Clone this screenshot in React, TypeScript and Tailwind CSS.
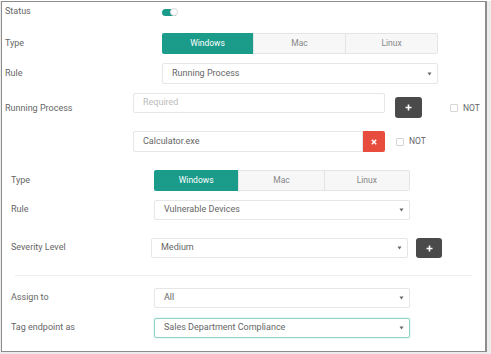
import type { ReactNode } from 'react';

const font = { fontFamily: 'Roboto, "Liberation Sans", sans-serif' };

function Caret() {
  return (
    <svg width="5" height="4" viewBox="0 0 5 4" className="shrink-0">
      <path d="M0.5 0.5 L4.5 0.5 L2.5 3.5 Z" fill="#666" />
    </svg>
  );
}

function Select({ value, className = '', focused = false }: { value: string; className?: string; focused?: boolean }) {
  return (
    <div
      className={`flex items-center justify-between rounded-[2px] border bg-white pl-[9px] pr-[5px] text-[9px] text-[#666] ${
        focused ? 'border-[#8fd3c6] shadow-[0_0_2px_#bfe8df]' : 'border-[#e6e6e6]'
      } ${className}`}
    >
      <span>{value}</span>
      <Caret />
    </div>
  );
}

function Segmented({ className = '' }: { className?: string }) {
  return (
    <div className={`flex text-[8.5px] ${className}`}>
      <div className="flex flex-1 items-center justify-center rounded-l-[2px] bg-[#1b9c8a] text-white">Windows</div>
      <div className="flex flex-1 items-center justify-center border border-[#e4e4e4] bg-[#f7f7f7] text-[#888]">Mac</div>
      <div className="flex flex-1 items-center justify-center rounded-r-[2px] border border-l-0 border-[#e4e4e4] bg-[#f7f7f7] text-[#888]">Linux</div>
    </div>
  );
}

function Label({ children, className = '' }: { children: ReactNode; className?: string }) {
  return <div className={`shrink-0 text-[9px] text-[#666] ${className}`}>{children}</div>;
}

function PlusButton({ className = '' }: { className?: string }) {
  return (
    <div className={`flex items-center justify-center rounded-[3px] bg-[#4a4a4a] ${className}`}>
      <svg width="7" height="7" viewBox="0 0 7 7">
        <path d="M3.5 0.5 V6.5 M0.5 3.5 H6.5" stroke="#fff" strokeWidth="1.6" />
      </svg>
    </div>
  );
}

function NotCheck({ className = '' }: { className?: string }) {
  return (
    <div className={`flex items-center gap-[5px] text-[8.5px] text-[#666] ${className}`}>
      <span className="h-[8px] w-[8px] rounded-[1px] border border-[#d6d6d6] bg-white" />
      <span>NOT</span>
    </div>
  );
}

export default function App() {
  return (
    <div className="h-[354px] w-[491px] bg-[#ececec]" style={font}>
      <div className="ml-[1px] mt-[1px] flex h-[351px] w-[486px] flex-col border border-r-2 border-[#8c8c8c] bg-white">
        {/* Status */}
        <div className="mt-[2px] flex h-[16px] items-center">
          <Label className="w-[160px] pl-[3px]">Status</Label>
          <div className="relative h-[7px] w-[15px] rounded-full bg-[#1b9c8a]">
            <span className="absolute right-[-1px] top-[-0.5px] h-[8px] w-[8px] rounded-full border border-[#d8d8d8] bg-white" />
          </div>
        </div>

        {/* Type */}
        <div className="mt-[13px] flex h-[21px] items-center">
          <Label className="w-[160px] pl-[3px]">Type</Label>
          <Segmented className="h-[21px] w-[276px]" />
        </div>

        {/* Rule */}
        <div className="mt-[9px] flex h-[21px] items-center">
          <Label className="w-[160px] pl-[3px]">Rule</Label>
          <Select value="Running Process" className="h-[21px] w-[276px]" />
        </div>

        {/* Running Process */}
        <div className="mt-[9px] flex h-[25px] items-start">
          <Label className="w-[131px] pl-[3px] pt-[9px]">Running Process</Label>
          <div className="flex h-[20px] w-[252px] items-center rounded-[2px] border border-[#e6e6e6] pl-[9px] text-[9px] text-[#bbb]">
            Required
          </div>
          <PlusButton className="ml-[10px] mt-[4px] h-[21px] w-[27px]" />
          <NotCheck className="ml-[28px] mt-[9px]" />
        </div>

        {/* Calculator */}
        <div className="mt-[13px] flex h-[21px] items-center">
          <div className="w-[131px] shrink-0" />
          <div className="flex h-[21px] w-[230px] items-center rounded-l-[2px] border border-[#e6e6e6] pl-[9px] text-[9px] text-[#666]">
            Calculator.exe
          </div>
          <div className="flex h-[21px] w-[22px] items-center justify-center rounded-r-[2px] bg-[#e74c3c]">
            <svg width="6" height="6" viewBox="0 0 6 6">
              <path d="M0.8 0.8 L5.2 5.2 M5.2 0.8 L0.8 5.2" stroke="#fff" strokeWidth="1.5" />
            </svg>
          </div>
          <NotCheck className="ml-[11px]" />
        </div>

        {/* Type 2 */}
        <div className="mt-[18px] flex h-[21px] items-center">
          <Label className="w-[152px] pl-[9px]">Type</Label>
          <Segmented className="h-[21px] w-[256px]" />
        </div>

        {/* Rule 2 */}
        <div className="mt-[9px] flex h-[20px] items-center">
          <Label className="w-[152px] pl-[9px]">Rule</Label>
          <Select value="Vulnerable Devices" className="h-[20px] w-[256px]" />
        </div>

        {/* Severity */}
        <div className="mt-[18px] flex h-[20px] items-center">
          <Label className="w-[149px] pl-[9px]">Severity Level</Label>
          <Select value="Medium" className="h-[20px] w-[257px]" />
          <PlusButton className="ml-[8px] h-[20px] w-[26px]" />
        </div>

        <div className="ml-[13px] mt-[17px] h-px w-[457px] bg-[#eeeeee]" />

        {/* Assign to */}
        <div className="mt-[12px] flex h-[20px] items-center">
          <Label className="w-[152px] pl-[9px]">Assign to</Label>
          <Select value="All" className="h-[20px] w-[256px]" />
        </div>

        {/* Tag endpoint */}
        <div className="mt-[10px] flex h-[20px] items-center">
          <Label className="w-[152px] pl-[9px]">Tag endpoint as</Label>
          <Select value="Sales Department Compliance" className="h-[20px] w-[256px]" focused />
        </div>
      </div>
    </div>
  );
}
